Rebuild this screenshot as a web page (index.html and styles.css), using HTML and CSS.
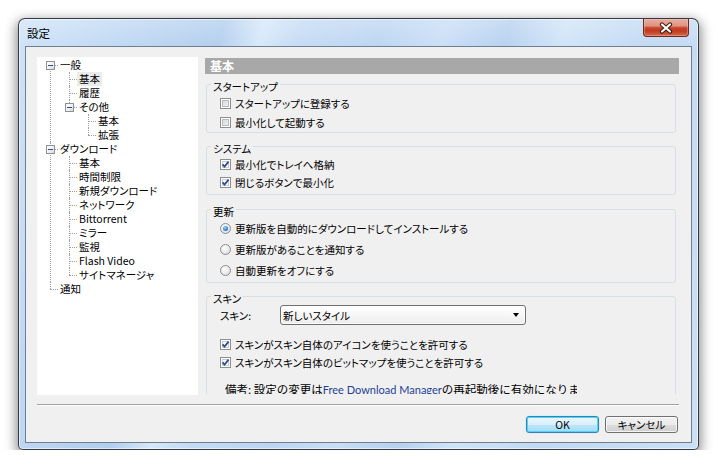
FILE: index.html
```html
<!DOCTYPE html>
<html lang="ja">
<head>
<meta charset="utf-8">
<title>設定</title>
<link rel="stylesheet" href="styles.css">
</head>
<body>
<div class="window">
  <div class="titlebar">
    <span class="title">設定</span>
    <div class="close" role="button" aria-label="閉じる">
      <svg width="16" height="12" viewBox="0 0 16 12">
        <path d="M4 2.5 L12 9.5 M12 2.5 L4 9.5" stroke="#3b1711" stroke-width="4.2" stroke-linecap="round" fill="none"/>
        <path d="M4 2.5 L12 9.5 M12 2.5 L4 9.5" stroke="#ffffff" stroke-width="2.2" stroke-linecap="round" fill="none"/>
      </svg>
    </div>
  </div>
  <div class="client">
    <div class="main">
      <div class="tree">
        <ul class="tree-root">
          <li><span class="exp"></span><span class="lbl">一般</span>
            <ul>
              <li><span class="lbl sel">基本</span></li>
              <li><span class="lbl">履歴</span></li>
              <li><span class="exp"></span><span class="lbl">その他</span>
                <ul>
                  <li><span class="lbl">基本</span></li>
                  <li><span class="lbl">拡張</span></li>
                </ul>
              </li>
            </ul>
          </li>
          <li><span class="exp"></span><span class="lbl">ダウンロード</span>
            <ul>
              <li><span class="lbl">基本</span></li>
              <li><span class="lbl">時間制限</span></li>
              <li><span class="lbl">新規ダウンロード</span></li>
              <li><span class="lbl">ネットワーク</span></li>
              <li><span class="lbl">Bittorrent</span></li>
              <li><span class="lbl">ミラー</span></li>
              <li><span class="lbl">監視</span></li>
              <li><span class="lbl">Flash Video</span></li>
              <li><span class="lbl">サイトマネージャ</span></li>
            </ul>
          </li>
          <li><span class="lbl">通知</span></li>
        </ul>
      </div>
      <div class="pane">
        <div class="pane-head">基本</div>
        <fieldset class="grp g1">
          <legend>スタートアップ</legend>
          <div class="rows">
            <div class="opt"><span class="chk"></span>スタートアップに登録する</div>
            <div class="opt"><span class="chk"></span>最小化して起動する</div>
          </div>
        </fieldset>
        <fieldset class="grp g2">
          <legend>システム</legend>
          <div class="rows">
            <div class="opt"><span class="chk on"><svg width="11" height="11" viewBox="0 0 11 11"><path d="M2.6 5.4 L4.5 7.6 L8.6 2.6" stroke="#2b4b8f" stroke-width="1.7" fill="none"/></svg></span>最小化でトレイへ格納</div>
            <div class="opt"><span class="chk on"><svg width="11" height="11" viewBox="0 0 11 11"><path d="M2.6 5.4 L4.5 7.6 L8.6 2.6" stroke="#2b4b8f" stroke-width="1.7" fill="none"/></svg></span>閉じるボタンで最小化</div>
          </div>
        </fieldset>
        <fieldset class="grp g3">
          <legend>更新</legend>
          <div class="rows">
            <div class="opt"><span class="radio on"></span>更新版を自動的にダウンロードしてインストールする</div>
            <div class="opt"><span class="radio"></span>更新版があることを通知する</div>
            <div class="opt"><span class="radio"></span>自動更新をオフにする</div>
          </div>
        </fieldset>
        <fieldset class="grp g4">
          <legend>スキン</legend>
          <div class="rows">
            <div class="combo-row">
              <span class="combo-label">スキン:</span>
              <div class="combo"><span class="combo-text">新しいスタイル</span><span class="arrow"></span></div>
            </div>
            <div class="opt first"><span class="chk on"><svg width="11" height="11" viewBox="0 0 11 11"><path d="M2.6 5.4 L4.5 7.6 L8.6 2.6" stroke="#2b4b8f" stroke-width="1.7" fill="none"/></svg></span>スキンがスキン自体のアイコンを使うことを許可する</div>
            <div class="opt second"><span class="chk on"><svg width="11" height="11" viewBox="0 0 11 11"><path d="M2.6 5.4 L4.5 7.6 L8.6 2.6" stroke="#2b4b8f" stroke-width="1.7" fill="none"/></svg></span>スキンがスキン自体のビットマップを使うことを許可する</div>
            <div class="note">備考: 設定の変更は<span class="app">Free Download Manager</span>の再起動後に有効になります。</div>
          </div>
        </fieldset>
      </div>
    </div>
    <div class="separator"></div>
    <div class="buttons">
      <div class="btn default" role="button">OK</div>
      <div class="btn" role="button">キャンセル</div>
    </div>
  </div>
</div>
</body>
</html>
```

FILE: styles.css
```css
html, body {
  margin: 0;
  padding: 0;
  background: #ffffff;
}

body {
  font-family: "Noto Sans CJK JP", "Noto Sans", sans-serif;
  font-size: 10.5px;
  font-feature-settings: "palt";
  color: #000;
  overflow: hidden;
}

.window {
  box-sizing: border-box;
  width: 681px;
  height: 432px;
  margin: 18px 0 0 18px;
  border: 1px solid rgba(35, 40, 48, 0.9);
  border-radius: 7px 7px 5px 5px;
  background:
    linear-gradient(180deg, rgba(255,255,255,0.25) 0%, rgba(255,255,255,0) 30px),
    linear-gradient(105deg, #cfe3f8 0%, #c0d9f3 12%, #b2ceee 26%, #d6e8f9 31%, #c4dbf4 36%, #bcd5f1 46%, #c9def6 54%, #b6d1ef 62%, #d0e4f8 69%, #c1d9f3 80%, #cbe0f6 100%);
  box-shadow: 0 4px 12px 2px rgba(0, 0, 0, 0.45), inset 0 0 0 1px rgba(255, 255, 255, 0.55);
  display: flex;
  flex-direction: column;
  align-items: flex-start;
}

.titlebar {
  height: 27px;
  width: 100%;
  display: flex;
  align-items: center;
  box-sizing: border-box;
  padding-left: 8px;
}

.title {
  font-size: 11.5px;
  line-height: 14px;
  color: #000;
  flex: 1;
  padding-top: 1px;
}

.close {
  align-self: flex-start;
  box-sizing: border-box;
  width: 46px;
  height: 18px;
  margin-right: 9px;
  border: 1px solid #6d2a20;
  border-top: none;
  border-radius: 0 0 4px 4px;
  background: linear-gradient(180deg, #e9ad9f 0%, #e09482 40%, #c8442a 52%, #c13a20 70%, #d66a4c 100%);
  box-shadow: inset 0 0 0 1px rgba(255, 210, 200, 0.35);
  display: flex;
  align-items: center;
  justify-content: center;
}

.client {
  box-sizing: border-box;
  width: 667px;
  height: 397px;
  margin-left: 6px;
  border: 1px solid #707e8f;
  background: #f0f0f0;
  display: flex;
  flex-direction: column;
}

.main {
  display: flex;
  padding: 10px 0 0 11px;
  gap: 7px;
  align-items: flex-start;
}

/* Tree */
.tree {
  width: 161px;
  height: 338px;
  background: #fff;
  box-sizing: border-box;
  padding-top: 1px;
  flex: none;
}

.tree ul {
  list-style: none;
  margin: 0;
  padding: 0;
}

.tree li {
  position: relative;
  padding-left: 21px;
  line-height: 14px;
}

.tree li ul {
  margin-left: -2px;
}

.tree li::before {
  content: "";
  position: absolute;
  left: 13px;
  top: 7px;
  width: 8px;
  border-top: 1px dotted #a0a0a0;
}

.tree li::after {
  content: "";
  position: absolute;
  left: 13px;
  top: 0;
  bottom: 0;
  border-left: 1px dotted #a0a0a0;
}

.tree li:last-child::after {
  bottom: auto;
  height: 7px;
}

.tree-root > li:first-child::after {
  top: 7px;
}

.tree .lbl {
  display: inline-block;
  vertical-align: top;
  height: 14px;
  line-height: 14px;
  padding: 0 2px;
  white-space: nowrap;
}

.tree .lbl.sel {
  background: #ebebeb;
}

.tree .exp {
  position: absolute;
  z-index: 1;
  left: 9px;
  top: 3px;
  width: 7px;
  height: 7px;
  border: 1px solid #919191;
  background: linear-gradient(135deg, #ffffff 0%, #f2f2f2 50%, #d6d6d6 100%);
}

.tree .exp::after {
  content: "";
  position: absolute;
  left: 1px;
  top: 3px;
  width: 5px;
  height: 1px;
  background: #2a4ba0;
}

/* Right pane */
.pane {
  width: 474px;
  height: 336px;
  margin-top: 1px;
  overflow: hidden;
  flex: none;
}

.pane-head {
  height: 16px;
  line-height: 16px;
  background: #a8a8a8;
  color: #fff;
  font-weight: bold;
  font-size: 12px;
  padding-left: 5px;
}

.grp {
  margin: 0 3px 0 1px;
  padding: 0 4px;
  border: 1px solid #d5dfe5;
  border-radius: 3px;
  min-width: 0;
}

.grp legend {
  padding: 5px 2px 0;
  line-height: 12px;
  font-size: 10.5px;
}

.rows {
  padding-left: 9px;
  display: flex;
  flex-direction: column;
}

.g1 { margin-top: 2px; }
.g1 .rows { padding-top: 2px; padding-bottom: 2px; gap: 3px; }

.g2 { margin-top: 5px; }
.g2 .rows { padding-top: 1px; padding-bottom: 4px; gap: 2px; }

.g3 { margin-top: 6px; }
.g3 .rows { padding-top: 2px; padding-bottom: 4px; gap: 5px; }

.g4 { margin-top: 5px; }
.g4 .rows { padding-top: 0; padding-bottom: 10px; }

.opt {
  display: flex;
  align-items: center;
  height: 16px;
  white-space: nowrap;
}

.opt.first {
  margin-top: 11px;
}

.opt.second {
  margin-top: 2px;
}

.chk {
  box-sizing: border-box;
  width: 11px;
  height: 11px;
  margin-right: 4px;
  border: 1px solid #8e8f8f;
  background: #f4f4f4;
  box-shadow: inset 0 0 0 1px #ffffff, inset 0 0 0 2px #b8bcc2;
  position: relative;
  flex: none;
}

.chk:not(.on) {
  background: linear-gradient(135deg, #cfd2d6 0%, #e8e9eb 60%, #f6f6f6 100%);
}

.chk.on {
  background: #fbfbfb;
  box-shadow: inset 0 0 0 1px #ffffff, inset 0 0 0 2px #c9cdd2;
}

.chk svg {
  position: absolute;
  left: -1px;
  top: -1px;
}

.radio {
  box-sizing: border-box;
  width: 11px;
  height: 11px;
  margin-right: 4px;
  border: 1px solid #8e8f8f;
  border-radius: 50%;
  background: radial-gradient(circle at 40% 35%, #ffffff 0%, #e9e9e9 55%, #cfcfcf 100%);
  flex: none;
  display: flex;
  align-items: center;
  justify-content: center;
}

.radio.on::after {
  content: "";
  width: 5px;
  height: 5px;
  border-radius: 50%;
  background: radial-gradient(circle at 40% 35%, #9fd7ff 0%, #2f86d6 55%, #174f94 100%);
}

.combo-row {
  display: flex;
  align-items: center;
  height: 20px;
}

.combo-label {
  width: 60px;
  flex: none;
}

.combo {
  box-sizing: border-box;
  width: 246px;
  height: 20px;
  border: 1px solid #707070;
  border-radius: 3px;
  background: linear-gradient(180deg, #ffffff 0%, #f7f7f7 50%, #ececec 100%);
  box-shadow: inset 0 0 0 1px rgba(255, 255, 255, 0.8);
  display: flex;
  align-items: center;
  padding: 0 6px 0 2px;
}

.combo-text {
  flex: 1;
}

.arrow {
  width: 0;
  height: 0;
  border-left: 3.5px solid transparent;
  border-right: 3.5px solid transparent;
  border-top: 4px solid #000;
}

.note {
  margin-top: 12px;
  margin-left: 5px;
  height: 14px;
  line-height: 14px;
  width: 352px;
  overflow: hidden;
  white-space: nowrap;
  font-size: 11.5px;
  font-feature-settings: normal;
}

.note .app {
  color: #1f3f97;
  font-family: Lato, "Liberation Sans", sans-serif;
  font-size: 11px;
}

/* Bottom */
.separator {
  margin: 9px 0 0 11px;
  width: 642px;
  height: 0;
  border-top: 1px solid #a0a0a0;
  border-bottom: 1px solid #ffffff;
}

.buttons {
  display: flex;
  justify-content: flex-end;
  gap: 6px;
  margin-top: 10px;
  padding-right: 13px;
}

.btn {
  box-sizing: border-box;
  width: 73px;
  height: 17px;
  border: 1px solid #707070;
  border-radius: 3px;
  background: linear-gradient(180deg, #f2f2f2 0%, #ebebeb 50%, #dddddd 51%, #cfcfcf 100%);
  box-shadow: inset 0 0 0 1px rgba(255, 255, 255, 0.75);
  display: flex;
  align-items: center;
  justify-content: center;
  line-height: 14px;
}

.btn.default {
  border-color: #3c7fb1;
  background: linear-gradient(180deg, #eaf6fd 0%, #d9f0fc 50%, #bee6fd 51%, #a7d9f5 100%);
  box-shadow: inset 0 0 0 1px #48d8fb, 0 0 1px #48d8fb;
}
```
